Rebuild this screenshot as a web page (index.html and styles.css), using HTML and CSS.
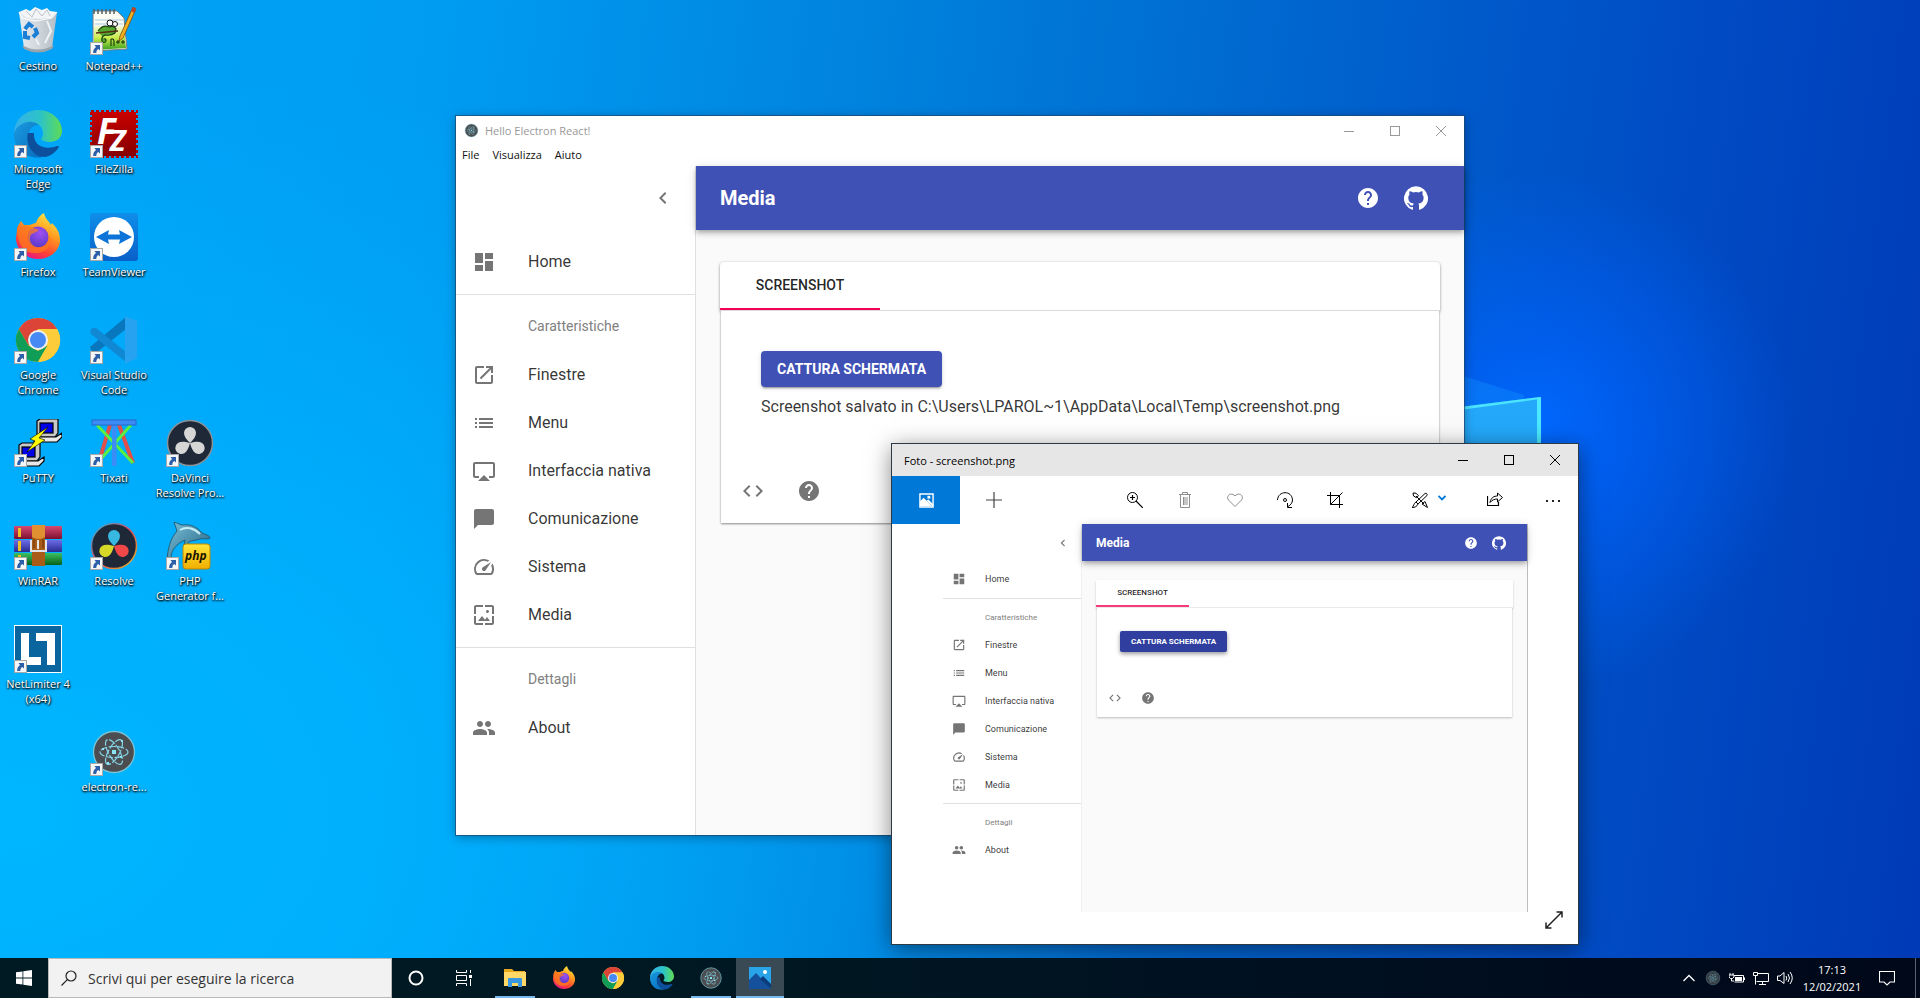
FILE: index.html
```html
<!DOCTYPE html>
<html lang="it">
<head>
<meta charset="utf-8">
<title>Desktop</title>
<link rel="stylesheet" href="styles.css">
</head>
<body>
<svg class="sprite" aria-hidden="true">
  <defs>
    <linearGradient id="gEdgeTop" x1="0" y1="0" x2="1" y2="0"><stop offset="0" stop-color="#35b0ea"/><stop offset=".55" stop-color="#2cc3c8"/><stop offset="1" stop-color="#5fdc52"/></linearGradient>
    <linearGradient id="gEdgeMid" x1="0" y1="0" x2="1" y2="1"><stop offset="0" stop-color="#1b9de2"/><stop offset="1" stop-color="#0667b8"/></linearGradient>
    <linearGradient id="gFox" x1=".8" y1="0" x2=".3" y2="1"><stop offset="0" stop-color="#fff04a"/><stop offset=".4" stop-color="#ff9a1e"/><stop offset=".75" stop-color="#ff4036"/><stop offset="1" stop-color="#e31587"/></linearGradient>
    <radialGradient id="gFoxIn" cx=".6" cy=".3" r=".8"><stop offset="0" stop-color="#a04ff0"/><stop offset="1" stop-color="#5137c4"/></radialGradient>
    <linearGradient id="gFz" x1="0" y1="0" x2="0" y2="1"><stop offset="0" stop-color="#c80000"/><stop offset="1" stop-color="#850000"/></linearGradient>
    <linearGradient id="gTv" x1="0" y1="0" x2="0" y2="1"><stop offset="0" stop-color="#0e8ee9"/><stop offset="1" stop-color="#0a60c8"/></linearGradient>
    <linearGradient id="gPad" x1="0" y1="0" x2="0" y2="1"><stop offset="0" stop-color="#f4fad8"/><stop offset=".5" stop-color="#c8ec4a"/><stop offset="1" stop-color="#3aa020"/></linearGradient>
    <linearGradient id="gRed" x1="0" y1="0" x2="0" y2="1"><stop offset="0" stop-color="#d84a70"/><stop offset="1" stop-color="#7c1030"/></linearGradient>
    <linearGradient id="gBlue" x1="0" y1="0" x2="0" y2="1"><stop offset="0" stop-color="#6c6ce8"/><stop offset="1" stop-color="#2a2a90"/></linearGradient>
    <linearGradient id="gGreen" x1="0" y1="0" x2="0" y2="1"><stop offset="0" stop-color="#3cc060"/><stop offset="1" stop-color="#086018"/></linearGradient>
    <linearGradient id="gPhp" x1="0" y1="0" x2="0" y2="1"><stop offset="0" stop-color="#ffe63a"/><stop offset="1" stop-color="#f0ae00"/></linearGradient>
    <linearGradient id="gDol" x1="0" y1="0" x2="1" y2="1"><stop offset="0" stop-color="#7cc0d8"/><stop offset="1" stop-color="#1c5c7c"/></linearGradient>
    <linearGradient id="gBin" x1="0" y1="0" x2="1" y2="0"><stop offset="0" stop-color="#e6ecf0"/><stop offset=".5" stop-color="#cfd6dc"/><stop offset="1" stop-color="#b4bec6"/></linearGradient>
    <linearGradient id="gRing" x1="0" y1="0" x2="1" y2="1"><stop offset="0" stop-color="#20b8e0"/><stop offset=".5" stop-color="#e04860"/><stop offset="1" stop-color="#e0c020"/></linearGradient>
  </defs>

  <symbol id="shortcut" viewBox="0 0 13 13"><rect x=".5" y=".5" width="12" height="12" fill="#f4f6f8" stroke="#a8a8a8"/><path d="M4.500 3H10v5.500L8.300 6.900C6.800 8 6.200 9.300 6.300 11H3.200C3 8.500 4 6.400 6 5z" fill="#2c5fa8"/></symbol>

  <symbol id="bin" viewBox="0 0 48 48"><path d="M5 5h38l-5 36q-6 4-14 4t-14-4z" fill="url(#gBin)"/><path d="M5 5l7-3 4 2 5-4 7 3 5-2 3 3 7 1-6 6-12 1-12-1z" fill="#f3f5f7"/><path d="M12 4l6 6 4-8 6 7 5-6 3 6" fill="none" stroke="#b9c2ca" stroke-width="1"/><path d="M5 5l3 6 14 3 16-3 5-6" fill="none" stroke="#fff"/><path d="M8 38q16 9 32 0l-2 4q-14 7-28 0z" fill="#9aa4ac"/><path d="M33 14l4 10-6 12M25 38l-3-6" stroke="#eef2f5" stroke-width="2" fill="none"/><g fill="none" stroke="#1c7fd6" stroke-width="4"><path d="M11 22l4-5 4 3"/><path d="M21 21l2 5-4 4"/><path d="M16 31l-5-1 0-6"/></g></symbol>

  <symbol id="edge" viewBox="0 0 48 48"><path d="M0 24C1 12 12 5 22 8c8 2 11 8 11 12-4-6-14-8-18 2-4 12 4 22 14 25C13 50 0 40 0 24z" fill="url(#gEdgeMid)"/><path d="M0 24C0 10 11 0 24 0c14 0 24 10 24 21 0 7-6 11-12 11-5 0-9-2-9-3 1-2 2-3 2-6C28 14 20 11 14 12 7 13 1 18 0 24z" fill="url(#gEdgeTop)"/><path d="M14 23c-3 12 5 24 17 24 6-1 11-5 14-10 0-1-1-1-2-1-11 4-24 1-23-13-3 0-5 0-6 0z" fill="#0c4f9c"/></symbol>

  <symbol id="firefox" viewBox="0 0 48 48"><path d="M3 17c0-4 3-7 4-9l3 4 6 0c2-1 4-2 6-2 1-4 4-8 8-10 1 6 5 8 7 12l1-2c5 5 8 10 8 17C46 38 36 46 24 46S2 37 2 25z" fill="url(#gFox)"/><circle cx="24" cy="24" r="10.500" fill="url(#gFoxIn)"/><path d="M3 17c3-4 7-5 11-4 2 0 3 2 6 2 4 1 5 2 4 3l-6 3c-2 1-2 3-2 5 0 5 5 9 10 8 7-1 10-6 9-13 4 9-1 18-12 19C11 41 4 34 3 17z" fill="#ff7a1e" opacity=".75"/></symbol>

  <symbol id="teamviewer" viewBox="0 0 48 48"><rect width="48" height="48" rx="3" fill="url(#gTv)"/><circle cx="24" cy="24" r="20" fill="#fff"/><path d="M6 24l13-7-1 4.500h12L29 17l13 7-13 7 1-4.500H18L19 31z" fill="#0c74d8"/></symbol>

  <symbol id="chrome" viewBox="0 0 48 48"><circle cx="24" cy="24" r="22" fill="#fbc934"/><path d="M4.900 13A22 22 0 0 1 43.100 13H24L14.500 29.500z" fill="#db4437"/><path d="M4.900 13A22 22 0 0 0 24 46l9.500-16.500-9.500 5.500-9.500-5.500z" fill="#0f9d58"/><path d="M24 13h19.100A22 22 0 0 1 24 46l9.500-16.500z" fill="#fdcc3a"/><circle cx="24" cy="24" r="10" fill="#f1f1f1"/><circle cx="24" cy="24" r="8" fill="#4688f4"/></symbol>

  <symbol id="vscode" viewBox="0 0 48 48"><path d="M0 31l36-30v12L7 36q-3 2-5 0z" fill="#0877bd"/><path d="M0 15q2-4 6-3l30 24v10L1 18z" fill="#1088d4"/><path d="M35 0l12 5v37l-12 6z" fill="#27a2f0"/></symbol>

  <symbol id="putty" viewBox="0 0 48 48"><g stroke="#000" stroke-width="1.200"><path d="M23 2l3-2h18v14l-3 4H23z" fill="#c8c8c8"/><path d="M22 18h20l6-4v4l-5 5H20z" fill="#e8e8e8"/><rect x="26" y="4" width="13" height="10" fill="#0000e8"/><path d="M5 26l3-2h18v14l-3 4H5z" fill="#c8c8c8"/><path d="M4 42h20l6-4v4l-5 5H2z" fill="#e8e8e8"/><rect x="8" y="28" width="13" height="10" fill="#0000e8"/><path d="M34 8L16 20l5 2-8 11 18-12-6-2z" fill="#ffff00" stroke-width=".6"/></g></symbol>

  <symbol id="tixati" viewBox="0 0 48 48"><path d="M20 6L9 43M29 6l14 38" stroke="#e05048" stroke-width="4"/><path d="M7 6l36 38M41 6L9 42" stroke="#5cf040" stroke-width="3"/><rect x="22" y="4" width="4.500" height="43" fill="#3c8cf8"/><rect x="2" y="1" width="44" height="5" fill="#3c8cf8" stroke="#2868c8"/></symbol>

  <symbol id="davinci" viewBox="0 0 48 48"><circle cx="24" cy="24" r="22.500" fill="#1e2836" stroke="#8c9298" stroke-width="1.500"/><g fill="#d6d6d6"><path d="M24 24c-4-4-6-7-6-10a6 6 0 0 1 12 0c0 3-2 6-6 10z"/><path d="M24 24c-4-4-6-7-6-10a6 6 0 0 1 12 0c0 3-2 6-6 10z" transform="rotate(120 24 24)"/><path d="M24 24c-4-4-6-7-6-10a6 6 0 0 1 12 0c0 3-2 6-6 10z" transform="rotate(240 24 24)"/></g></symbol>

  <symbol id="resolve" viewBox="0 0 48 48"><circle cx="24" cy="24" r="22.500" fill="#1e2836" stroke="url(#gRing)" stroke-width="1.500"/><path d="M24 24c-4-4-6-7-6-10a6 6 0 0 1 12 0c0 3-2 6-6 10z" fill="#38b8e0"/><path d="M24 24c-4-4-6-7-6-10a6 6 0 0 1 12 0c0 3-2 6-6 10z" transform="rotate(120 24 24)" fill="#f04848"/><path d="M24 24c-4-4-6-7-6-10a6 6 0 0 1 12 0c0 3-2 6-6 10z" transform="rotate(240 24 24)" fill="#d8d828"/></symbol>

  <symbol id="winrar" viewBox="0 0 48 48"><rect y="4" width="48" height="13" rx="1" fill="url(#gRed)"/><rect y="18" width="48" height="12" rx="1" fill="url(#gBlue)"/><rect y="31" width="48" height="12" rx="1" fill="url(#gGreen)"/><path d="M4 6h3v9H4zM4 19h3v10H4zM4 33h3v9H4z" fill="#f0c020"/><rect x="18" y="3" width="13" height="41" fill="#a85c18"/><path d="M18 3h13v12q-6 4-13 0z" fill="#e09030"/><path d="M20 17v9M29 17v9" stroke="#6c3408"/><path d="M17 18v11h15V18M24 18v9" stroke="#e4e4e8" stroke-width="2" fill="none"/></symbol>

  <symbol id="netlimiter" viewBox="0 0 48 48"><rect x=".5" y=".5" width="47" height="47" fill="#0a659e" stroke="#fff"/><path d="M7 8h8v24h12v8H7zM22 8h19v32h-8V16H22z" fill="#fff"/></symbol>

  <symbol id="electron" viewBox="0 0 48 48"><circle cx="24" cy="24" r="20.500" fill="#4b4d50" stroke="#7cc4d4" stroke-width="1.300"/><g fill="none" stroke="#86d4e6" stroke-width="1.200" stroke-dasharray="7 1.500"><ellipse cx="24" cy="24" rx="14" ry="5.500"/><ellipse cx="24" cy="24" rx="14" ry="5.500" transform="rotate(60 24 24)"/><ellipse cx="24" cy="24" rx="14" ry="5.500" transform="rotate(120 24 24)"/></g><rect x="22" y="22" width="4" height="4" fill="#8ae4f4"/><path d="M12 20h2v2h-2zM31 12h2v2h-2zM30 28h2v2h-2zM17 34h2v2h-2z" fill="#8ae4f4"/></symbol>

  <symbol id="dashboard" viewBox="0 0 24 24"><path d="M3 13h8V3H3v10zm0 8h8v-6H3v6zm10 0h8V11h-8v10zm0-18v6h8V3h-8z"/></symbol>
  <symbol id="open" viewBox="0 0 24 24"><path d="M19 19H5V5h7V3H5c-1.110 0-2 .9-2 2v14c0 1.100.89 2 2 2h14c1.100 0 2-.9 2-2v-7h-2v7zM14 3v2h3.590l-9.830 9.830 1.410 1.410L19 6.410V10h2V3h-7z"/></symbol>
  <symbol id="list" viewBox="0 0 24 24"><path d="M3 13h2v-2H3v2zm0 4h2v-2H3v2zm0-8h2V7H3v2zm4 4h14v-2H7v2zm0 4h14v-2H7v2zM7 7v2h14V7H7z"/></symbol>
  <symbol id="airplay" viewBox="0 0 24 24"><path d="M6 22h12l-6-6zM21 3H3c-1.100 0-2 .9-2 2v12c0 1.100.9 2 2 2h4v-2H3V5h18v12h-4v2h4c1.100 0 2-.9 2-2V5c0-1.100-.9-2-2-2z"/></symbol>
  <symbol id="bubble" viewBox="0 0 24 24"><path d="M20 2H4c-1.100 0-2 .9-2 2v18l4-4h14c1.100 0 2-.9 2-2V4c0-1.100-.9-2-2-2z"/></symbol>
  <symbol id="speed" viewBox="0 0 24 24"><path d="M20.380 8.570l-1.230 1.850a8 8 0 0 1-.22 7.580H5.070A8 8 0 0 1 15.580 6.850l1.850-1.230A10 10 0 0 0 3.350 19a2 2 0 0 0 1.720 1h13.850a2 2 0 0 0 1.740-1 10 10 0 0 0-.27-10.440zm-9.790 6.840a2 2 0 0 0 2.830 0l5.660-8.490-8.490 5.660a2 2 0 0 0 0 2.830z"/></symbol>
  <symbol id="wallpaper" viewBox="0 0 24 24"><path d="M4 4h7V2H4c-1.100 0-2 .9-2 2v7h2V4zm6 9l-4 5h12l-3-4-2.030 2.710L10 13zm7-4.500c0-.83-.67-1.500-1.500-1.500S14 7.670 14 8.500s.67 1.500 1.500 1.500S17 9.330 17 8.500zM20 2h-7v2h7v7h2V4c0-1.100-.9-2-2-2zm0 18h-7v2h7c1.100 0 2-.9 2-2v-7h-2v7zM4 13H2v7c0 1.100.9 2 2 2h7v-2H4v-7z"/></symbol>
  <symbol id="people" viewBox="0 0 24 24"><path d="M16 11c1.660 0 2.990-1.340 2.990-3S17.660 5 16 5c-1.660 0-3 1.340-3 3s1.340 3 3 3zm-8 0c1.660 0 2.990-1.340 2.990-3S9.660 5 8 5C6.340 5 5 6.340 5 8s1.340 3 3 3zm0 2c-2.330 0-7 1.170-7 3.500V19h14v-2.500c0-2.330-4.670-3.500-7-3.500zm8 0c-.29 0-.62.02-.97.05 1.160.84 1.970 1.970 1.970 3.450V19h6v-2.500c0-2.330-4.670-3.500-7-3.500z"/></symbol>
  <symbol id="help" viewBox="0 0 24 24"><path d="M12 2C6.480 2 2 6.480 2 12s4.480 10 10 10 10-4.480 10-10S17.520 2 12 2zm1 17h-2v-2h2v2zm2.070-7.750l-.9.92C13.450 12.900 13 13.500 13 15h-2v-.5c0-1.100.45-2.100 1.170-2.830l1.240-1.260c.37-.36.59-.86.59-1.410 0-1.100-.9-2-2-2s-2 .9-2 2H8c0-2.210 1.790-4 4-4s4 1.790 4 4c0 .88-.36 1.680-.93 2.250z"/></symbol>
  <symbol id="code" viewBox="0 0 24 24"><path d="M9.400 16.600L4.800 12l4.600-4.600L8 6l-6 6 6 6 1.400-1.400zm5.200 0l4.600-4.600-4.600-4.600L16 6l6 6-6 6-1.400-1.400z"/></symbol>
  <symbol id="chevron" viewBox="0 0 24 24"><path d="M15.410 7.410L14 6l-6 6 6 6 1.410-1.410L10.830 12z"/></symbol>
  <symbol id="github" viewBox="0 0 24 24"><path d="M12 .3a12 12 0 0 0-3.800 23.400c.6.1.8-.3.8-.6v-2c-3.300.7-4-1.600-4-1.600-.6-1.400-1.400-1.800-1.400-1.800-1-.7.1-.7.1-.7 1.200 0 1.900 1.200 1.900 1.200 1 1.800 2.800 1.300 3.500 1 0-.8.4-1.300.7-1.600-2.700-.3-5.500-1.300-5.500-6 0-1.200.5-2.300 1.300-3.100-.2-.4-.6-1.600 0-3.200 0 0 1-.3 3.400 1.200a11.500 11.500 0 0 1 6 0c2.300-1.500 3.300-1.200 3.300-1.200.6 1.600.2 2.800 0 3.200.9.8 1.300 1.900 1.300 3.200 0 4.600-2.800 5.600-5.500 5.900.5.4.9 1 .9 2.200v3.300c0 .3.1.7.8.6A12 12 0 0 0 12 .3"/></symbol>

  <symbol id="win-min" viewBox="0 0 10 10"><path d="M0 5.500h10" stroke="currentColor"/></symbol>
  <symbol id="win-max" viewBox="0 0 10 10"><rect x=".5" y=".5" width="9" height="9" fill="none" stroke="currentColor"/></symbol>
  <symbol id="win-close" viewBox="0 0 10 10"><path d="M0 0l10 10M10 0L0 10" stroke="currentColor"/></symbol>
</svg>

<main class="desktop">
  <svg class="glow" viewBox="0 0 200 130" aria-hidden="true">
    <path d="M0 22L64 42v5L0 60z" fill="#1496ff" opacity=".35"/>
    <path d="M0 54l80-10v86H0z" fill="#24a8fa"/>
    <path d="M0 54l80-10v2L0 57z" fill="#4ce4fc"/>
    <path d="M77 45l4-1v86h-4z" fill="#4ce8fc"/>
  </svg>

  <nav class="shortcuts" aria-label="Icone del desktop">
    <button class="shortcut c1 r1"><svg><use href="#bin"/></svg><span>Cestino</span></button>
    <button class="shortcut c1 r2"><svg><use href="#edge"/></svg><svg class="arrow"><use href="#shortcut"/></svg><span>Microsoft Edge</span></button>
    <button class="shortcut c1 r3"><svg><use href="#firefox"/></svg><svg class="arrow"><use href="#shortcut"/></svg><span>Firefox</span></button>
    <button class="shortcut c1 r4"><svg><use href="#chrome"/></svg><svg class="arrow"><use href="#shortcut"/></svg><span>Google Chrome</span></button>
    <button class="shortcut c1 r5"><svg><use href="#putty"/></svg><svg class="arrow"><use href="#shortcut"/></svg><span>PuTTY</span></button>
    <button class="shortcut c1 r6"><svg><use href="#winrar"/></svg><svg class="arrow"><use href="#shortcut"/></svg><span>WinRAR</span></button>
    <button class="shortcut c1 r7"><svg><use href="#netlimiter"/></svg><svg class="arrow"><use href="#shortcut"/></svg><span>NetLimiter 4 (x64)</span></button>
    <button class="shortcut c2 r1">
      <svg viewBox="0 0 48 48"><path d="M3 4h24l7 7 3 31-34 2z" fill="#fbfcf4" stroke="#767a7c"/><path d="M5 17h28M5 13h28M5 21h28" stroke="#a8c8e0"/><path d="M4 19h30l2 22-32 2z" fill="url(#gPad)"/><path d="M4 2v5M8 2v5M12 2v5M16 2v5M20 2v5M24 2v5" stroke="#5a5e60" stroke-width="1.500"/><path d="M8 24q5-7 11-4 5-2 7 2l-1 4q-4 3-10 2-4 2-3 6 2 3 4 0 0-3-2-2" fill="#54a830" stroke="#163c10" stroke-width="1.200"/><circle cx="20" cy="16" r="3" fill="#fff" stroke="#111"/><circle cx="25" cy="17" r="2.500" fill="#fff" stroke="#111"/><path d="M6 26l22-2" stroke="#5a2c14" stroke-width="1.500"/><path d="M21 39v-7q3-1 3 2v5M26 35h4M28 33v4M31 35h4M33 33v4" fill="none" stroke="#102808"/><path d="M43 0l3 2-13 29-4 3 1-5z" fill="#f0b020" stroke="#7c4a10" stroke-width=".8"/><path d="M43 0l3 2-2 4-3-2z" fill="#c04030"/></svg>
      <svg class="arrow"><use href="#shortcut"/></svg><span>Notepad++</span></button>
    <button class="shortcut c2 r2">
      <svg viewBox="0 0 48 48"><rect x="1" y="1" width="46" height="46" fill="none" stroke="#b80000" stroke-width="2" stroke-dasharray="3 2"/><rect x="2" y="2" width="44" height="44" fill="url(#gFz)"/><text x="7" y="34" class="logo-text" font-size="35" fill="#fff">F<tspan x="20" y="41" font-size="29">Z</tspan></text></svg>
      <svg class="arrow"><use href="#shortcut"/></svg><span>FileZilla</span></button>
    <button class="shortcut c2 r3"><svg><use href="#teamviewer"/></svg><svg class="arrow"><use href="#shortcut"/></svg><span>TeamViewer</span></button>
    <button class="shortcut c2 r4"><svg><use href="#vscode"/></svg><svg class="arrow"><use href="#shortcut"/></svg><span>Visual Studio Code</span></button>
    <button class="shortcut c2 r5"><svg><use href="#tixati"/></svg><svg class="arrow"><use href="#shortcut"/></svg><span>Tixati</span></button>
    <button class="shortcut c2 r6"><svg><use href="#resolve"/></svg><svg class="arrow"><use href="#shortcut"/></svg><span>Resolve</span></button>
    <button class="shortcut c2 r8"><svg><use href="#electron"/></svg><svg class="arrow"><use href="#shortcut"/></svg><span>electron-re...</span></button>
    <button class="shortcut c3 r5"><svg><use href="#davinci"/></svg><svg class="arrow"><use href="#shortcut"/></svg><span>DaVinci Resolve Pro...</span></button>
    <button class="shortcut c3 r6">
      <svg viewBox="0 0 48 48"><path d="M8 0c4 1 6 3 9 3 8-1 14 2 19 8 5 2 8 3 8 5-2 2-7 0-10 1-5 2-10 1-12 4 0 2-3 4-4 2l1-5C10 22 6 28 5 34l4 5-3 4-3-5-2-1c1-10 3-20 10-28z" fill="url(#gDol)" stroke="#1c5068" stroke-width=".8"/><path d="M14 8c6-4 14-2 20 4" stroke="#c4ecf4" stroke-width="2" fill="none"/><rect x="17" y="22" width="27" height="25" rx="3" fill="url(#gPhp)" stroke="#c08800"/><text x="19" y="38" class="logo-text" font-size="12" fill="#1a1400">php</text></svg>
      <svg class="arrow"><use href="#shortcut"/></svg><span>PHP Generator f...</span></button>
  </nav>

  <section class="window window-electron" aria-label="Hello Electron React!">
    <header class="titlebar">
      <svg class="title-icon"><use href="#electron"/></svg>
      <span class="title">Hello Electron React!</span>
      <button class="win-button" aria-label="Riduci a icona"><svg><use href="#win-min"/></svg></button>
      <button class="win-button" aria-label="Ingrandisci"><svg><use href="#win-max"/></svg></button>
      <button class="win-button" aria-label="Chiudi"><svg><use href="#win-close"/></svg></button>
    </header>
    <nav class="menubar"><button>File</button><button>Visualizza</button><button>Aiuto</button></nav>
    <div class="app">
      <aside class="drawer">
        <div class="drawer-head"><button class="icon-button" aria-label="Chiudi menu"><svg class="mi"><use href="#chevron"/></svg></button></div>
        <div class="nav-list"><a class="nav-item" href="#home"><svg class="mi"><use href="#dashboard"/></svg><span>Home</span></a></div>
        <div class="nav-list">
          <div class="nav-label">Caratteristiche</div>
          <a class="nav-item" href="#finestre"><svg class="mi"><use href="#open"/></svg><span>Finestre</span></a>
          <a class="nav-item" href="#menu"><svg class="mi"><use href="#list"/></svg><span>Menu</span></a>
          <a class="nav-item" href="#nativa"><svg class="mi"><use href="#airplay"/></svg><span>Interfaccia nativa</span></a>
          <a class="nav-item" href="#comunicazione"><svg class="mi"><use href="#bubble"/></svg><span>Comunicazione</span></a>
          <a class="nav-item" href="#sistema"><svg class="mi"><use href="#speed"/></svg><span>Sistema</span></a>
          <a class="nav-item" href="#media"><svg class="mi"><use href="#wallpaper"/></svg><span>Media</span></a>
        </div>
        <div class="nav-list">
          <div class="nav-label">Dettagli</div>
          <a class="nav-item" href="#about"><svg class="mi"><use href="#people"/></svg><span>About</span></a>
        </div>
      </aside>
      <div class="page">
        <header class="appbar">
          <h1>Media</h1>
          <button class="icon-button" aria-label="Aiuto"><svg class="mi"><use href="#help"/></svg></button>
          <button class="icon-button" aria-label="GitHub"><svg class="mi"><use href="#github"/></svg></button>
        </header>
        <div class="content">
          <section class="card">
            <div class="tabs"><button class="tab">SCREENSHOT</button></div>
            <div class="panel">
              <div class="panel-body">
                <button class="primary">CATTURA SCHERMATA</button>
                <p>Screenshot salvato in C:\Users\LPAROL~1\AppData\Local\Temp\screenshot.png</p>
              </div>
              <div class="actions">
                <button class="icon-button" aria-label="Codice"><svg class="mi"><use href="#code"/></svg></button>
                <button class="icon-button" aria-label="Guida"><svg class="mi"><use href="#help"/></svg></button>
              </div>
            </div>
          </section>
        </div>
      </div>
    </div>
  </section>

  <section class="window window-photo" aria-label="Foto">
    <header class="titlebar">
      <span class="title">Foto - screenshot.png</span>
      <button class="win-button" aria-label="Riduci a icona"><svg><use href="#win-min"/></svg></button>
      <button class="win-button" aria-label="Ingrandisci"><svg><use href="#win-max"/></svg></button>
      <button class="win-button" aria-label="Chiudi"><svg><use href="#win-close"/></svg></button>
    </header>
    <div class="toolbar">
      <button class="tool tool-home" aria-label="Tutte le foto"><svg viewBox="0 0 16 16"><path d="M1 1h14v14H1z" fill="none" stroke="#fff" stroke-width="1.500"/><path d="M1 9l4-4 9 9H1z" fill="#fff"/><path d="M8 8l2-1 5 5v3z" fill="#fff"/><path d="M9 3h3v3H9z" fill="#fff"/></svg></button>
      <button class="tool tool-add" aria-label="Aggiungi"><svg viewBox="0 0 16 16"><path d="M8 0v16M0 8h16" stroke="#444" stroke-width="1.200"/></svg></button>
      <span class="tool-space"></span>
      <button class="tool" aria-label="Zoom"><svg viewBox="0 0 16 16"><circle cx="5.500" cy="5.500" r="5" fill="none" stroke="#000"/><path d="M5.500 3v5M3 5.500h5M9 9l7 7" stroke="#000" stroke-width="1.200"/></svg></button>
      <button class="tool faded" aria-label="Elimina"><svg viewBox="0 0 16 16"><path d="M2 2.500h12M5.500 2V.5h5V2M3.500 3v12.500h9V3M6.500 5v8M8 5v8M10 5v8" fill="none" stroke="#333"/></svg></button>
      <button class="tool faded" aria-label="Preferiti"><svg viewBox="0 0 16 16"><path d="M8 14.500L1.500 8C-1.500 4 4-.5 8 4c4-4.500 9.500 0 6.500 4z" fill="none" stroke="#333"/></svg></button>
      <button class="tool" aria-label="Ruota"><svg viewBox="0 0 16 16"><path d="M.500 8C1-1.500 15-2 15.500 8c0 3-2 5-4.500 6.500M10.500 11v4.500H15" fill="none" stroke="#000"/><circle cx="8" cy="8" r="1.500" fill="none" stroke="#000"/></svg></button>
      <button class="tool" aria-label="Ritaglia"><svg viewBox="0 0 16 16"><path d="M3.500 0v12.500H16M0 3.500h12.500V16M3.500 12.500L15.500.5" fill="none" stroke="#000"/></svg></button>
      <button class="tool tool-edit" aria-label="Modifica"><svg viewBox="0 0 16 16"><path d="M4 10L13 1.500c1-1 3 1 2 2L6 12M4 4l8 8M1 1l3 .2 2.500 2.500-2 2L1.500 4zM10 12l3-2.500 2.500 6zM4 10l2 2c-1 2.500-3 3.500-6 3.500 2-1.500 1.500-4 4-5.500z" fill="none" stroke="#000"/></svg></button>
      <button class="tool tool-drop" aria-label="Altre modifiche"><svg viewBox="0 0 8 6"><path d="M.5 1L4 4.500 7.500 1" fill="none" stroke="#0078d7" stroke-width="1.800"/></svg></button>
      <button class="tool tool-share" aria-label="Condividi"><svg viewBox="0 0 16 16"><path d="M.5 4v9.500h11V10" fill="none" stroke="#000" stroke-width="1.200"/><path d="M3 10.500c1-5 4-6.500 7.500-6.500V1l5 4.500-5 4.500V7C7.500 7 5 8 3 10.500z" fill="none" stroke="#000"/></svg></button>
      <button class="tool tool-more" aria-label="Altro"><svg viewBox="0 0 16 16"><path d="M1 8h2v2H1zM7 8h2v2H7zM13 8h2v2h-2z" fill="#222"/></svg></button>
    </div>
    <figure class="photo">
      <div class="app app-mini">
        <aside class="drawer">
          <div class="drawer-head"><span class="icon-button"><svg class="mi"><use href="#chevron"/></svg></span></div>
          <div class="nav-list"><div class="nav-item"><svg class="mi"><use href="#dashboard"/></svg><span>Home</span></div></div>
          <div class="nav-list">
            <div class="nav-label">Caratteristiche</div>
            <div class="nav-item"><svg class="mi"><use href="#open"/></svg><span>Finestre</span></div>
            <div class="nav-item"><svg class="mi"><use href="#list"/></svg><span>Menu</span></div>
            <div class="nav-item"><svg class="mi"><use href="#airplay"/></svg><span>Interfaccia nativa</span></div>
            <div class="nav-item"><svg class="mi"><use href="#bubble"/></svg><span>Comunicazione</span></div>
            <div class="nav-item"><svg class="mi"><use href="#speed"/></svg><span>Sistema</span></div>
            <div class="nav-item"><svg class="mi"><use href="#wallpaper"/></svg><span>Media</span></div>
          </div>
          <div class="nav-list">
            <div class="nav-label">Dettagli</div>
            <div class="nav-item"><svg class="mi"><use href="#people"/></svg><span>About</span></div>
          </div>
        </aside>
        <div class="page">
          <div class="appbar">
            <h2>Media</h2>
            <span class="icon-button"><svg class="mi"><use href="#help"/></svg></span>
            <span class="icon-button"><svg class="mi"><use href="#github"/></svg></span>
          </div>
          <div class="content">
            <div class="card">
              <div class="tabs"><span class="tab">SCREENSHOT</span></div>
              <div class="panel">
                <div class="panel-body"><button class="primary">CATTURA SCHERMATA</button></div>
                <div class="actions">
                  <span class="icon-button"><svg class="mi"><use href="#code"/></svg></span>
                  <span class="icon-button"><svg class="mi"><use href="#help"/></svg></span>
                </div>
              </div>
            </div>
          </div>
        </div>
      </div>
    </figure>
    <button class="expand" aria-label="Schermo intero"><svg viewBox="0 0 18 18"><path d="M1 17L17 1M11.500 1H17v5.500M1 11.500V17h5.500" fill="none" stroke="#222" stroke-width="1.500"/></svg></button>
  </section>
</main>

<footer class="taskbar">
  <button class="start" aria-label="Start"><svg viewBox="0 0 16 16"><path d="M0 2.300L6.500 1.400V7.600H0zM7.300 1.300L16 0v7.600H7.300zM0 8.400h6.500v6.200L0 13.700zM7.300 8.400H16V16l-8.700-1.300z" fill="#fff"/></svg></button>
  <label class="search">
    <svg viewBox="0 0 16 16"><circle cx="10" cy="6" r="5" fill="none" stroke="#222" stroke-width="1.200"/><path d="M6.300 9.700L.5 15.500" stroke="#222" stroke-width="1.200"/></svg>
    <input type="text" placeholder="Scrivi qui per eseguire la ricerca" aria-label="Cerca">
  </label>
  <button class="task" aria-label="Cortana"><svg viewBox="0 0 24 24"><circle cx="12" cy="12" r="6.500" fill="none" stroke="#fff" stroke-width="2"/></svg></button>
  <button class="task" aria-label="Visualizzazione attività"><svg viewBox="0 0 24 24"><path d="M4.500 4v2.500h10V4M4.500 20v-2.500h10V20M4.500 9.500h10v5h-10zM18.500 4v3M18.500 13v7" fill="none" stroke="#fff"/><path d="M17 9h3v3h-3z" fill="#fff"/></svg></button>
  <div class="running">
    <button class="task open" aria-label="Esplora file"><svg viewBox="0 0 24 24"><path d="M1 3h8l2 2h11v15H1z" fill="#e8a820"/><path d="M1 6h22v14H1z" fill="#ffd868"/><path d="M5 13q0-1 1-1h12q1 0 1 1v8h-4v-4H9v4H5z" fill="#3a98e0"/></svg></button>
    <button class="task" aria-label="Firefox"><svg><use href="#firefox"/></svg></button>
    <button class="task" aria-label="Chrome"><svg><use href="#chrome"/></svg></button>
    <button class="task" aria-label="Edge"><svg><use href="#edge"/></svg></button>
    <button class="task open" aria-label="Electron React"><svg><use href="#electron"/></svg></button>
    <button class="task open active" aria-label="Foto"><svg viewBox="0 0 24 24"><path d="M1 1h22v22H1z" fill="#2aa4e8"/><path d="M1 14l7-7 15 16H1z" fill="#14509c"/><path d="M12 13l3-3 8 8v5z" fill="#0c3c7c"/><circle cx="17" cy="6" r="2" fill="#fff"/></svg></button>
  </div>
  <div class="tray">
    <button aria-label="Icone nascoste"><svg viewBox="0 0 16 16"><path d="M2.500 11L8 5.500l5.500 5.500" fill="none" stroke="#fff" stroke-width="1.300"/></svg></button>
    <button class="dim" aria-label="Electron"><svg><use href="#electron"/></svg></button>
    <button aria-label="Batteria"><svg viewBox="0 0 16 16"><path d="M5 5.500h9.500v6.500H5.500M15.500 7.500v2.500M1 3v2M4 3v2M0 5h5v2L3.500 8.500h-2L0 7zM2.500 8v3H5" fill="none" stroke="#fff"/><path d="M6 7h7v4H6z" fill="#fff"/></svg></button>
    <button aria-label="Rete"><svg viewBox="0 0 16 16"><path d="M4 3.500h11.500v8H3.500M9.500 12v2.500M6 14.500h7M.5 2.500h4v3h-4zM2.500 6v8.500" fill="none" stroke="#fff"/></svg></button>
    <button aria-label="Volume"><svg viewBox="0 0 16 16"><path d="M.5 6H3l4-3.500v11L3 10.500H.5zM9 6q1.500 2 0 4.500M11 4q3 4 0 8M13 2q4.500 6 0 12" fill="none" stroke="#fff"/></svg></button>
    <button class="clock"><time>17:13</time><span>12/02/2021</span></button>
    <button class="notify" aria-label="Notifiche"><svg viewBox="0 0 16 16"><path d="M.5 1.500h15v10.500H11L8 15l-3-3H.5z" fill="none" stroke="#fff" stroke-width="1.100"/></svg></button>
    <button class="peek" aria-label="Mostra desktop"></button>
  </div>
</footer>
</body>
</html>
```
FILE: styles.css
```css
* { box-sizing: border-box; }
html, body { height: 100%; }
body {
  margin: 0;
  display: grid;
  grid-template-rows: 1fr 40px;
  overflow: hidden;
  font-family: "Open Sans", "Noto Sans", sans-serif;
  font-size: 11px;
}
button {
  margin: 0;
  padding: 0;
  border: 0;
  background: none;
  color: inherit;
  font: inherit;
}
.sprite { position: absolute; width: 0; height: 0; }
.logo-text { font-family: "Open Sans", sans-serif; font-weight: 700; font-style: italic; text-shadow: none; }

/* Desktop */
.desktop {
  position: relative;
  background:
    radial-gradient(circle 260px at 80% 45%, #0068ff 0, rgba(0, 98, 250, .7) 35%, rgba(0, 90, 230, 0) 100%),
    radial-gradient(ellipse 60% 80% at 0% 85%, #00b6ff 0, rgba(0, 178, 255, .8) 40%, rgba(0, 170, 250, 0) 100%),
    linear-gradient(97deg, #00a4f8 0, #009cf2 22%, #0080dc 45%, #0064ce 65%, #004cc4 83%, #003ab6 100%);
}
.glow { position: absolute; left: 1460px; top: 353px; width: 200px; height: 130px; }
.shortcuts {
  display: grid;
  width: max-content;
  grid-template-columns: repeat(3, 76px);
  grid-auto-rows: 103px;
}
.shortcut {
  position: relative;
  display: flex;
  flex-direction: column;
  align-items: center;
  gap: 3px;
  padding-top: 7px;
  color: #fff;
  line-height: 15px;
  text-shadow: 0 1px 2px #000, 1px 1px 2px #000;
}
.shortcut svg { width: 48px; height: 48px; flex: none; }
.shortcut .arrow { position: absolute; left: 14px; top: 42px; width: 13px; height: 13px; }
.c1 { grid-column: 1; }
.c2 { grid-column: 2; }
.c3 { grid-column: 3; }
.r1 { grid-row: 1; }
.r2 { grid-row: 2; }
.r3 { grid-row: 3; }
.r4 { grid-row: 4; }
.r5 { grid-row: 5; }
.r6 { grid-row: 6; }
.r7 { grid-row: 7; }
.r8 { grid-row: 8; }

/* Windows */
.window {
  position: absolute;
  display: flex;
  flex-direction: column;
  background: #fff;
}
.window-electron {
  left: 456px;
  right: 456px;
  top: 116px;
  bottom: 123px;
  box-shadow: 0 0 0 1px rgba(30, 70, 110, .7), 0 2px 10px rgba(0, 0, 0, .35);
}
.window-photo {
  left: 892px;
  right: 342px;
  top: 444px;
  bottom: 14px;
  box-shadow: 0 0 0 1px #2c3a48, 0 4px 22px rgba(0, 0, 0, .5);
}
.titlebar { display: flex; align-items: center; height: 29px; color: #999; }
.title-icon { width: 15px; height: 15px; margin-left: 8px; }
.title { flex: 1; padding-left: 6px; }
.win-button { display: grid; place-items: center; width: 46px; height: 100%; }
.win-button svg { width: 10px; height: 10px; }
.menubar { display: flex; gap: 13px; height: 21px; padding: 0 0 2px 6px; color: #111; }
.window-photo .titlebar { height: 32px; background: #e6e6e6; color: #000; }
.window-photo .title { padding-left: 12px; }

/* Electron application */
.app {
  --drawer: 240px;
  --bar: 64px;
  --row: 48px;
  --pad: 8px;
  --gutter: 24px;
  --inset: 40px;
  --mi: 24px;
  --body: 16px;
  --small: 14px;
  --title: 20px;
  flex: 1;
  display: grid;
  grid-template-columns: var(--drawer) 1fr;
  font-family: Roboto, "Liberation Sans", sans-serif;
  color: rgba(0, 0, 0, .8);
}
.mi { width: var(--mi); height: var(--mi); fill: currentColor; }
.icon-button {
  display: grid;
  place-items: center;
  width: var(--row);
  height: var(--row);
  color: #757575;
}
.drawer { background: #fff; border-right: 1px solid #e0e0e0; }
.drawer-head {
  display: flex;
  align-items: center;
  justify-content: flex-end;
  height: var(--bar);
  padding-right: var(--pad);
}
.nav-list { padding: var(--pad) 0; }
.nav-list + .nav-list { border-top: 1px solid #e0e0e0; }
.nav-item, .nav-label { display: flex; align-items: center; height: var(--row); }
.nav-item {
  gap: calc(var(--pad) * 4);
  padding-left: calc(var(--pad) * 2);
  color: inherit;
  font-size: var(--body);
  text-decoration: none;
}
.nav-item .mi { color: #757575; }
.nav-item span, .nav-label { padding-bottom: 2px; }
.nav-label {
  padding-left: calc(var(--pad) * 6 + var(--mi));
  color: #808080;
  font-size: var(--small);
}
.page { background: #fafafa; }
.appbar {
  position: relative;
  display: flex;
  align-items: center;
  height: var(--bar);
  padding: 0 var(--gutter);
  background: #3f51b5;
  color: #fff;
  box-shadow: 0 2px 4px -1px rgba(0, 0, 0, .2), 0 4px 5px rgba(0, 0, 0, .14), 0 1px 10px rgba(0, 0, 0, .12);
}
.appbar h1, .appbar h2 { flex: 1; margin: 0; font-size: var(--title); font-weight: 700; }
.appbar .icon-button { color: #fff; }
.content { padding: calc(var(--pad) * 4) var(--gutter); }
.tabs {
  position: relative;
  display: flex;
  height: calc(var(--row) + 1px);
  border-bottom: 1px solid #e0e0e0;
  border-radius: 4px 4px 0 0;
  background: #fff;
  box-shadow: 0 1px 3px rgba(0, 0, 0, .45);
}
.tab {
  display: grid;
  place-items: center;
  width: 160px;
  border-bottom: 2px solid #f50057;
  color: rgba(0, 0, 0, .87);
  font-size: var(--small);
  font-weight: 500;
}
.panel {
  position: relative;
  margin: 0 1px;
  background: #fff;
  box-shadow: 0 1px 2px rgba(0, 0, 0, .45);
}
.panel-body { display: flex; flex-direction: column; align-items: flex-start; gap: var(--pad); padding: var(--inset); }
.panel-body p { margin: 0; font-size: var(--body); line-height: 24px; }
.primary {
  height: 36px;
  padding: 0 16px;
  border-radius: 4px;
  background: #3f51b5;
  color: #fff;
  font-size: var(--small);
  font-weight: 700;
  box-shadow: 0 3px 1px -2px rgba(0, 0, 0, .2), 0 2px 2px rgba(0, 0, 0, .14), 0 1px 5px rgba(0, 0, 0, .12);
}
.actions { display: flex; gap: var(--pad); padding: var(--pad); }

/* Captured application inside the photo viewer */
.app-mini {
  --drawer: 139px;
  --bar: 37px;
  --row: 28px;
  --pad: 4px;
  --gutter: 14px;
  --inset: 23px;
  --mi: 14px;
  --body: 9px;
  --small: 8px;
  --title: 12px;
  height: 100%;
  border-right: 1px solid #bdbdbd;
}
.app-mini .drawer { border-color: #f0f0f0; }
.app-mini .drawer-head + .nav-list { padding-bottom: 5px; }
.app-mini .nav-item { gap: 19px; padding-left: 9px; }
.app-mini .nav-item span, .app-mini .nav-label { padding-bottom: 0; }
.app-mini .nav-label { padding-left: 42px; }
.app-mini .content { padding-top: 19px; }
.app-mini .tabs { height: 28px; border-radius: 2px 2px 0 0; border-color: #eee; box-shadow: 0 1px 2px rgba(0, 0, 0, .25); }
.app-mini .tab { width: 93px; border-color: #f83a78; }
.app-mini .panel { box-shadow: 0 1px 2px rgba(0, 0, 0, .25); }
.app-mini .panel-body { padding-bottom: 28px; }
.app-mini .primary { height: 21px; padding: 0 11px; border-radius: 2px; background: #303f9f; box-shadow: 0 2px 4px rgba(0, 0, 0, .4); }
.app-mini .actions { gap: 5px; padding-bottom: 5px; }

/* Photo viewer */
.toolbar { display: flex; height: 48px; }
.tool { display: grid; place-items: center; width: 50px; }
.tool svg { width: 16px; height: 16px; }
.tool-home { width: 68px; background: #0078d7; }
.tool-home svg { width: 15px; height: 15px; }
.tool-add { width: 68px; }
.tool-space { flex: 1; }
.faded { opacity: .55; }
.tool-edit { width: 36px; margin-left: 42px; }
.tool-drop { width: 8px; padding-bottom: 4px; }
.tool-drop svg { width: 8px; height: 6px; }
.tool-share { margin-left: 24px; }
.tool-more { margin-left: 8px; }
.photo { flex: 1; display: flex; flex-direction: column; margin: 0 50px 32px 51px; }
.expand { position: absolute; right: 15px; bottom: 15px; width: 18px; height: 18px; }
.expand svg { display: block; width: 18px; height: 18px; }

/* Taskbar */
.taskbar {
  display: flex;
  position: relative;
  background: linear-gradient(90deg, #001a24 0, #001822 40%, #000e20 75%, #000819 100%);
  color: #fff;
}
.start { display: grid; place-items: center; width: 48px; }
.start svg { width: 16px; height: 16px; }
.search {
  display: flex;
  align-items: center;
  gap: 11px;
  width: 344px;
  padding-left: 12px;
  border: 1px solid #b8b8b8;
  background: #f2f2f2;
}
.search svg { width: 16px; height: 16px; flex: none; }
.search input {
  flex: 1;
  min-width: 0;
  padding: 0;
  border: 0;
  outline: 0;
  background: none;
  font: 14px "Open Sans", "Noto Sans", sans-serif;
}
.search input::placeholder { color: #333; opacity: 1; }
.task { display: grid; place-items: center; width: 48px; height: 40px; }
.task svg { width: 24px; height: 24px; }
.running { display: flex; gap: 1px; margin-left: 3px; }
.running .open { background: linear-gradient(#76b9ed, #76b9ed) center bottom / 40px 2px no-repeat; }
.running .active { background: linear-gradient(#76b9ed, #76b9ed) center bottom / 48px 2px no-repeat #3a4a54; }
.tray { display: flex; margin-left: auto; }
.tray button { display: grid; place-items: center; width: 24px; }
.tray svg { width: 16px; height: 16px; }
.tray .dim { opacity: .75; }
.tray .clock { width: 70px; align-content: center; line-height: 17px; }
.tray .notify { width: 40px; margin-right: 8px; }
.tray .peek { width: 5px; border-left: 1px solid #5a6470; }
```
